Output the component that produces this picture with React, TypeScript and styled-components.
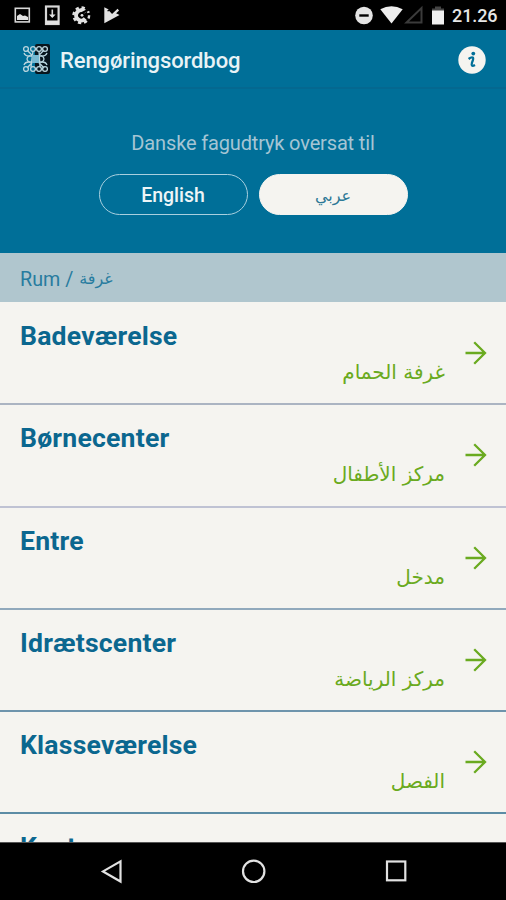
import React from "react";
import styled, { createGlobalStyle } from "styled-components";

const blue = "#006f98";
const green = "#6aaa20";
const cream = "#f5f4f0";

const GlobalStyle = createGlobalStyle`
  * { box-sizing: border-box; }
  body { margin: 0; background: #000; font-family: Roboto, "DejaVu Sans", sans-serif; }
`;

const Screen = styled.div`
  width: 506px;
  height: 900px;
  display: flex;
  flex-direction: column;
  overflow: hidden;
  background: ${cream};
`;

const StatusBar = styled.div`
  height: 30px;
  flex: none;
  background: #000;
  color: #e6e6e6;
  display: flex;
  justify-content: space-between;
  padding-right: 9px;
`;

const StatusIcons = styled.svg`
  display: block;
  height: 30px;
`;

const StatusRight = styled.div`
  display: flex;
`;

const Clock = styled.span`
  font-size: 18px;
  font-weight: 500;
  line-height: 32px;
  letter-spacing: -0.1px;
  width: 45px;
  white-space: nowrap;
`;

const AppBar = styled.header`
  height: 59px;
  flex: none;
  background: linear-gradient(${blue} 0 57px, #046890 57px);
  display: flex;
  align-items: center;
  padding: 0 20px 0 20px;
`;

const Title = styled.h1`
  margin: 2px 0 0 8px;
  font-size: 22px;
  line-height: 30px;
  letter-spacing: -0.1px;
  font-weight: 500;
  color: #e9f3f6;
  flex: 1;
  white-space: nowrap;
`;

const Hero = styled.section`
  height: 164px;
  flex: none;
  background: ${blue};
  display: flex;
  flex-direction: column;
  align-items: center;
  padding-top: 42px;
`;

const Caption = styled.p`
  margin: 0;
  font-size: 20px;
  line-height: 24px;
  letter-spacing: -0.15px;
  color: #a5c5d4;
  white-space: nowrap;
`;

const Languages = styled.div`
  display: flex;
  gap: 11px;
  margin-top: 19px;
`;

const LanguageButton = styled.button<{ $active?: boolean }>`
  width: 149px;
  height: 41px;
  border-radius: 21px;
  border: 1.5px solid ${(p) => (p.$active ? cream : "#a9d0df")};
  background: ${(p) => (p.$active ? cream : "transparent")};
  color: ${(p) => (p.$active ? "#2c7896" : "#edf5f7")};
  font: ${(p) => (p.$active ? "400 16px" : "500 19.5px")} Roboto, "DejaVu Sans", sans-serif;
  padding: 1px 0 0;
`;

const SectionTitle = styled.h2`
  height: 49px;
  flex: none;
  margin: 0;
  padding: 3px 20px 0;
  background: #b0c6ce;
  color: #287c9f;
  font-size: 19.7px;
  font-weight: 400;
  display: flex;
  align-items: center;
  gap: 6px;
`;

const SectionArabic = styled.span`
  font: 16px/24px "DejaVu Sans", sans-serif;
`;

const List = styled.ul`
  flex: 1;
  min-height: 0;
  margin: 0;
  padding: 1px 0 0;
  list-style: none;
  overflow: hidden;
`;

const Row = styled.li<{ $line: string }>`
  height: 102.3px;
  border-bottom: 2px solid ${(p) => p.$line};
  display: grid;
  grid-template-columns: 1fr 22px;
  column-gap: 20px;
  align-items: center;
  padding: 0 19px 0 20px;
`;

const Words = styled.div`
  align-self: start;
  padding-top: 17px;
  display: flex;
  flex-direction: column;
`;

const Danish = styled.span`
  font-size: 26.6px;
  line-height: 32px;
  letter-spacing: 0.2px;
  font-weight: 700;
  color: #0b678f;
`;

const Arabic = styled.span`
  align-self: flex-end;
  margin-top: 4px;
  font: 20px/32px "DejaVu Sans", sans-serif;
  color: ${green};
  white-space: nowrap;
`;

const NavBar = styled.nav`
  height: 58px;
  flex: none;
  background: #000;
  border-top: 1px solid #555;
`;

const Arrow = () => (
  <svg width="22" height="24" viewBox="0 0 22 24" fill="none" stroke={green} strokeWidth="2.3">
    <path d="M0.5 12H20M9.2 1.2L20 12L9.2 22.8" />
  </svg>
);

const rows = [
  { da: "Badeværelse", ar: "غرفة الحمام", line: "#abb4c2" },
  { da: "Børnecenter", ar: "مركز الأطفال", line: "#bfc2d3" },
  { da: "Entre", ar: "مدخل", line: "#91a9bc" },
  { da: "Idrætscenter", ar: "مركز الرياضة", line: "#6e94ac" },
  { da: "Klasseværelse", ar: "الفصل", line: "#5c8ca5" },
  { da: "Kontor", ar: "", line: "#5c8ca5" },
];

const Logo = () => (
  <svg width="32" height="34" viewBox="0 0 32 34" fill="none">
    <rect x="15" y="1" width="15" height="30" rx="2" fill="#07151d" />
    <g stroke="#b9d5de" strokeWidth="1.3" transform="translate(0 -1)">
      <circle cx="6" cy="7" r="2.4" /><circle cx="13" cy="7" r="2.4" />
      <circle cx="19" cy="7" r="2.4" /><circle cx="25" cy="7" r="2.4" />
      <circle cx="6" cy="27" r="2.4" /><circle cx="13" cy="27" r="2.4" />
      <circle cx="19" cy="27" r="2.4" /><circle cx="25" cy="27" r="2.4" />
      <path d="M4 11Q5 14 9 14Q5 17 9 20Q5 20 4 23M27 11Q26 14 22 14Q26 17 22 20Q26 20 27 23" />
      <path d="M7 8L24 26M24 8L7 26M13 9L11 25M19 9L20 25M9 14H22M9 20H22" />
      <path d="M12 13H19V21H12Z" fill="#78b9d1" stroke="none" />
    </g>
  </svg>
);

const Info = () => (
  <svg width="28" height="28" viewBox="0 0 28 28">
    <circle cx="14" cy="14" r="13.7" fill={cream} />
    <circle cx="15.3" cy="7.6" r="1.9" fill={blue} />
    <path d="M10.6 13Q13.6 10.6 15 11.6Q15.7 12.5 14 16.6Q12.6 21.6 17 19" fill="none" stroke={blue} strokeWidth="2.3" />
  </svg>
);

export default function App() {
  return (
    <>
      <GlobalStyle />
      <Screen>
        <StatusBar>
          <StatusIcons width="130" viewBox="0 0 130 30">
            <g fill="none" stroke="#d8d8d8" strokeWidth="1.6">
              <rect x="15.3" y="8.3" width="14" height="13.6" />
              <rect x="46" y="6.5" width="12.6" height="17.5" strokeWidth="2.2" />
              <path d="M52.3 9.5V17" />
            </g>
            <path d="M17 20V16L20 14L23 16L25 15.4L28 17V20Z M49 14.5H55.6L52.3 18Z M46 20.5H59V24H46Z" fill="#e2e2e2" />
            <circle cx="81.3" cy="15.3" r="5.2" fill="none" stroke="#e2e2e2" strokeWidth="4" strokeDasharray="25.5 7.2" transform="rotate(40 81.3 15.3)" />
            <circle cx="81.3" cy="15.3" r="7.8" fill="none" stroke="#e2e2e2" strokeWidth="2.4" strokeDasharray="3.3 2.83" />
            <path d="M82 13L90 9" stroke="#000" strokeWidth="2" />
            <circle cx="82" cy="15.3" r="1.4" fill="#e2e2e2" />
            <path d="M104.3 7.2L119.5 15L104.3 23.2Z" fill="#e2e2e2" />
            <path d="M108.5 9.5L112.3 13.6L118.5 7" fill="none" stroke="#000" strokeWidth="3.6" />
            <path d="M108.2 11.6L112 15.6L118.3 9.6" fill="none" stroke="#e2e2e2" strokeWidth="2.2" />
          </StatusIcons>
          <StatusRight>
            <StatusIcons width="97" viewBox="355 0 97 30">
              <circle cx="364" cy="15.5" r="8.8" fill="#e4e4e4" />
              <path d="M359.3 15.5H368.7" stroke="#000" strokeWidth="2.4" />
              <path d="M380.3 9.2Q391.5 3.2 402.7 9.2L391.5 23.5Z" fill="#eee" />
              <path d="M406.5 22.6H421.5V8Z" fill="none" stroke="#3b3b3b" strokeWidth="2" />
              <path d="M435 6.5H441V8.5H444V11H432V8.5H435Z" fill="#454545" />
              <rect x="432" y="10.5" width="12" height="14" fill="#efefef" />
            </StatusIcons>
            <Clock>21.26</Clock>
          </StatusRight>
        </StatusBar>
        <AppBar>
          <Logo />
          <Title>Rengøringsordbog</Title>
          <Info />
        </AppBar>
        <Hero>
          <Caption>Danske fagudtryk oversat til</Caption>
          <Languages>
            <LanguageButton>English</LanguageButton>
            <LanguageButton $active lang="ar">عربي</LanguageButton>
          </Languages>
        </Hero>
        <SectionTitle>
          <span>Rum /</span>
          <SectionArabic lang="ar">غرفة</SectionArabic>
        </SectionTitle>
        <List>
          {rows.map((r) => (
            <Row key={r.da} $line={r.line}>
              <Words>
                <Danish>{r.da}</Danish>
                {r.ar && <Arabic lang="ar" dir="rtl">{r.ar}</Arabic>}
              </Words>
              <Arrow />
            </Row>
          ))}
        </List>
        <NavBar>
          <svg width="506" height="57" viewBox="0 843 506 57" fill="none" stroke="#e2e2e2" strokeWidth="2.2">
            <path d="M120.5 861.3V881.5L103 871.4Z" />
            <circle cx="253.7" cy="871.3" r="10.7" />
            <rect x="387" y="861.5" width="18.3" height="18.8" />
          </svg>
        </NavBar>
      </Screen>
    </>
  );
}
